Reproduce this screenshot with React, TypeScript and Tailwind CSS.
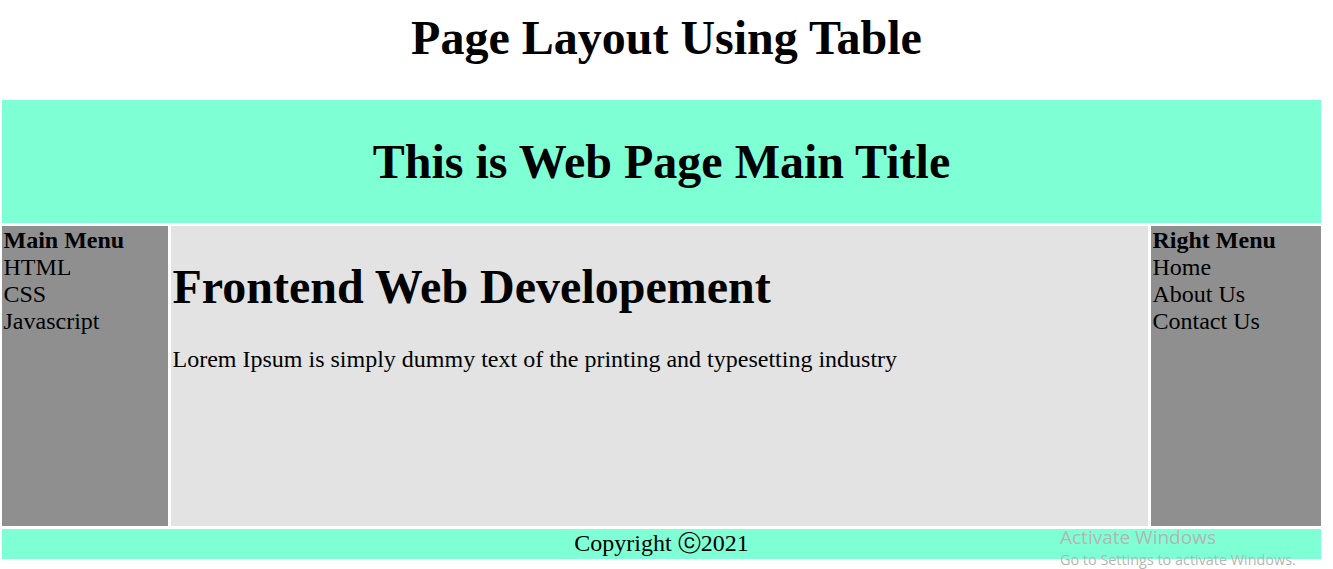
export default function App() {
  return (
    <div className="relative min-h-[569px] bg-white text-black font-['Liberation_Serif','Times_New_Roman',serif] leading-[normal]">
      <div className="h-[100px] pt-[10px]">
        <h1 className="text-center text-[48px] font-bold leading-[normal]">Page Layout Using Table</h1>
      </div>
      <div className="ml-[2px] grid w-[1319px] grid-cols-[166px_977px_170px] grid-rows-[123px_300px_30px] gap-[3px]">
        <div className="col-span-3 flex items-center justify-center bg-[#7fffd4] pb-[1px]">
          <h1 className="text-[48px] font-bold leading-[normal]">This is Web Page Main Title</h1>
        </div>
        <div className="bg-[#8f8f8f] px-[1.5px] pt-[0.5px] text-[24px] leading-[normal]">
          <div className="font-bold">Main Menu</div>
          <div>HTML</div>
          <div>CSS</div>
          <div>Javascript</div>
        </div>
        <div className="bg-[#e3e3e3] px-[1.5px] pt-[1px]">
          <h1 className="mt-[32px] text-[48px] font-bold leading-[normal]">Frontend Web Developement</h1>
          <p className="mt-[32px] text-[24px] leading-[normal]">Lorem Ipsum is simply dummy text of the printing and typesetting industry</p>
        </div>
        <div className="bg-[#8f8f8f] px-[1.5px] pt-[0.5px] text-[24px] leading-[normal]">
          <div className="font-bold">Right Menu</div>
          <div>Home</div>
          <div>About Us</div>
          <div>Contact Us</div>
        </div>
        <div className="col-span-3 flex items-center justify-center bg-[#7fffd4] pb-[2px] text-[24px] leading-[normal]">
          <span>
            Copyright <span className="font-['DejaVu_Sans',sans-serif] text-[23px]">ⓒ</span>2021
          </span>
        </div>
      </div>
      <div className="pointer-events-none absolute left-[1060px] top-[525px] font-['Open_Sans','Noto_Sans',sans-serif] text-[#b5b5b5]">
        <div className="text-[19px] leading-[24px]">Activate Windows</div>
        <div className="text-[14.4px] leading-[21px]">Go to Settings to activate Windows.</div>
      </div>
    </div>
  );
}
